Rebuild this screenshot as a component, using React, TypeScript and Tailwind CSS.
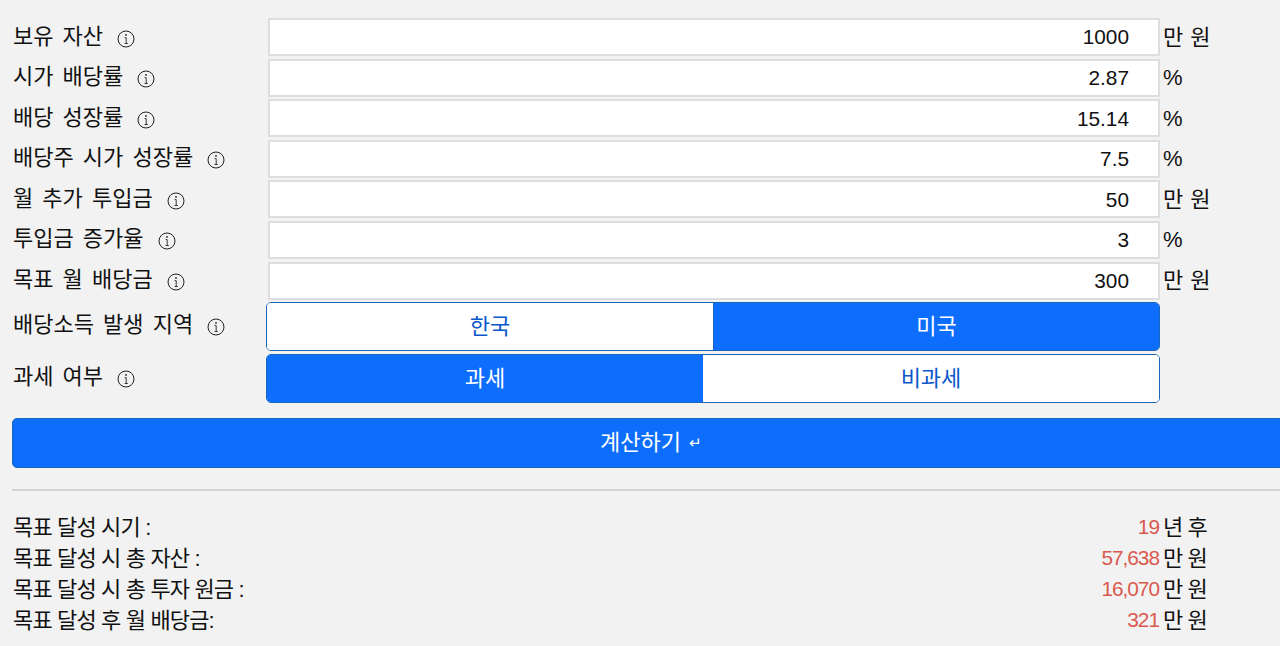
import React from 'react';

const Info = () => (
  <svg className="mt-[3px] shrink-0" width="18" height="18" viewBox="0 0 18 18" fill="none" stroke="#222" strokeWidth="1">
    <circle cx="9" cy="9" r="8" />
    <circle cx="9" cy="4.9" r="0.9" fill="#222" stroke="none" />
    <path d="M7.6 7.6H9.2V13.4M7.6 13.5H10.8" strokeWidth="0.9" />
  </svg>
);

const inputs = [
  { label: '보유 자산', value: '1000', unit: '만 원' },
  { label: '시가 배당률', value: '2.87', unit: '%' },
  { label: '배당 성장률', value: '15.14', unit: '%' },
  { label: '배당주 시가 성장률', value: '7.5', unit: '%' },
  { label: '월 추가 투입금', value: '50', unit: '만 원' },
  { label: '투입금 증가율', value: '3', unit: '%' },
  { label: '목표 월 배당금', value: '300', unit: '만 원' },
];

const results = [
  { label: '목표 달성 시기 :', value: '19', unit: '년 후' },
  { label: '목표 달성 시 총 자산 :', value: '57,638', unit: '만 원' },
  { label: '목표 달성 시 총 투자 원금 :', value: '16,070', unit: '만 원' },
  { label: '목표 달성 후 월 배당금:', value: '321', unit: '만 원' },
];

const Label = ({ text }: { text: string }) => (
  <div className="flex items-center gap-[14px] pl-px">
    <span className="-mt-[2px] text-[22px] [word-spacing:3px]">{text}</span>
    <Info />
  </div>
);

export default function App() {
  return (
    <div className="h-[646px] w-[1280px] overflow-hidden bg-[#f2f2f2] pl-[12px] pt-[18px] font-['Liberation_Sans','Noto_Sans_CJK_KR',sans-serif] text-[20.8px] text-[#111]">
      <div className="flex w-[1230px] flex-col gap-[2.6px]">
        {inputs.map((row) => (
          <div key={row.label} className="flex h-[38px] items-center">
            <div className="w-[256px] shrink-0"><Label text={row.label} /></div>
            <div className="flex h-full w-[892px] shrink-0 items-center justify-end border-2 border-[#dedede] bg-white pr-[29px]">
              {row.value}
            </div>
            <span className="ml-[3px] text-[22px] [word-spacing:1px]">{row.unit}</span>
          </div>
        ))}
      </div>

      <div className="mt-[2px] flex h-[49px] items-center">
        <div className="w-[254px] shrink-0 pb-[2px]"><Label text="배당소득 발생 지역" /></div>
        <div className="flex h-full w-[894px] overflow-hidden rounded-[5px] border border-[#1a66b8] text-[22px]">
          <div className="flex w-[446px] items-center justify-center bg-white text-[#0a58ca]">한국</div>
          <div className="flex flex-1 items-center justify-center border-l border-[#1a66b8] bg-[#0d6efd] text-white">미국</div>
        </div>
      </div>

      <div className="mt-[3px] flex h-[49px] items-center">
        <div className="w-[254px] shrink-0 pb-[2px]"><Label text="과세 여부" /></div>
        <div className="flex h-full w-[894px] overflow-hidden rounded-[5px] border border-[#1a66b8] text-[22px]">
          <div className="flex w-[436px] items-center justify-center bg-[#0d6efd] text-white">과세</div>
          <div className="flex flex-1 items-center justify-center bg-white text-[#0a58ca]">비과세</div>
        </div>
      </div>

      <button className="mt-[15px] flex h-[50px] w-[1290px] items-center justify-center gap-[8px] rounded-[5px] border border-[#1a66b8] bg-[#0d6efd] pr-[12px] text-[22px] text-white">
        <span className="-mt-px">계산하기</span> <span className="mt-[2px] text-[15px]">↵</span>
      </button>

      <div className="mt-[21px] h-[2px] w-[1268px] bg-[#d4d4d4]" />

      <div className="mt-[21px] flex w-[1198px] flex-col">
        {results.map((row) => (
          <div key={row.label} className="flex h-[31px] items-center whitespace-nowrap">
            <span className="flex-1 pl-px text-[22px] tracking-[-0.85px]">{row.label}</span>
            <span className="pr-[3px] text-right tracking-[-1px] text-[#d9594f]">{row.value}</span>
            <span className="w-[48px] pl-px text-[22px] tracking-[-0.9px]">{row.unit}</span>
          </div>
        ))}
      </div>
    </div>
  );
}
